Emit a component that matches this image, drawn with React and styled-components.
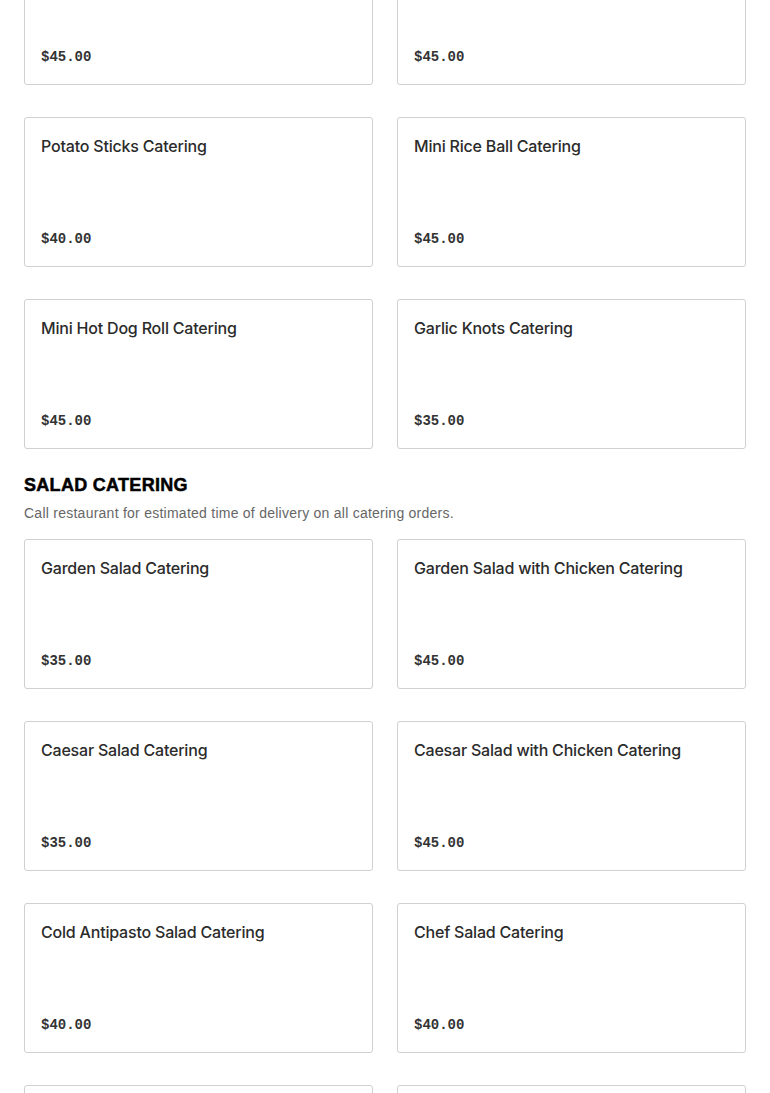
import React from "react";
import styled, { createGlobalStyle } from "styled-components";

const GlobalStyle = createGlobalStyle`
  html, body {
    margin: 0;
    padding: 0;
    background: #fff;
  }
  body {
    font-family: Inter, "Liberation Sans", Arial, sans-serif;
    color: #2b2b2b;
  }
`;

const Page = styled.div`
  height: 1093px;
  overflow: hidden;
`;

const Content = styled.div`
  margin-top: -65px;
  padding: 0 24px;
`;

const Section = styled.section`
  & + & {
    margin-top: 24px;
  }
`;

const Heading = styled.h2`
  margin: 0;
  font-family: "Liberation Sans", Arial, sans-serif;
  font-weight: 700;
  font-size: 18px;
  line-height: 24px;
  letter-spacing: 0.3px;
  -webkit-text-stroke: 0.5px #000;
  color: #000;
  text-transform: uppercase;
`;

const Note = styled.p`
  margin: 6px 0 16px;
  font-family: "Liberation Sans", Arial, sans-serif;
  font-size: 14px;
  line-height: 20px;
  letter-spacing: 0.25px;
  color: #666;
`;

const Grid = styled.div`
  display: grid;
  grid-template-columns: 1fr 1fr;
  column-gap: 24px;
  row-gap: 32px;
`;

const Card = styled.div`
  height: 150px;
  box-sizing: border-box;
  border: 1px solid #d0d0d0;
  border-radius: 3px;
  padding: 16px;
  display: flex;
  flex-direction: column;
  justify-content: space-between;
  background: #fff;
`;

const Title = styled.div`
  font-size: 16px;
  line-height: 24px;
  font-weight: 500;
  letter-spacing: -0.2px;
  color: #2b2b2b;
`;

const Price = styled.div`
  font-family: "Liberation Mono", "DejaVu Sans Mono", monospace;
  font-size: 14px;
  line-height: 20px;
  font-weight: 700;
  color: #333;
  margin-bottom: 1px;
`;

const sections = [
  {
    items: [
      ["Chicken Fingers Catering", "$45.00"],
      ["Buffalo Wings Catering", "$45.00"],
      ["Potato Sticks Catering", "$40.00"],
      ["Mini Rice Ball Catering", "$45.00"],
      ["Mini Hot Dog Roll Catering", "$45.00"],
      ["Garlic Knots Catering", "$35.00"],
    ],
  },
  {
    name: "Salad Catering",
    note: "Call restaurant for estimated time of delivery on all catering orders.",
    items: [
      ["Garden Salad Catering", "$35.00"],
      ["Garden Salad with Chicken Catering", "$45.00"],
      ["Caesar Salad Catering", "$35.00"],
      ["Caesar Salad with Chicken Catering", "$45.00"],
      ["Cold Antipasto Salad Catering", "$40.00"],
      ["Chef Salad Catering", "$40.00"],
      ["Greek Salad Catering", "$40.00"],
      ["Tossed Salad Catering", "$35.00"],
    ],
  },
];

export default function App() {
  return (
    <Page>
      <GlobalStyle />
      <Content>
        {sections.map((s, i) => (
          <Section key={i}>
            {s.name && <Heading>{s.name}</Heading>}
            {s.note && <Note>{s.note}</Note>}
            <Grid>
              {s.items.map(([title, price]) => (
                <Card key={title}>
                  <Title>{title}</Title>
                  <Price>{price}</Price>
                </Card>
              ))}
            </Grid>
          </Section>
        ))}
      </Content>
    </Page>
  );
}
